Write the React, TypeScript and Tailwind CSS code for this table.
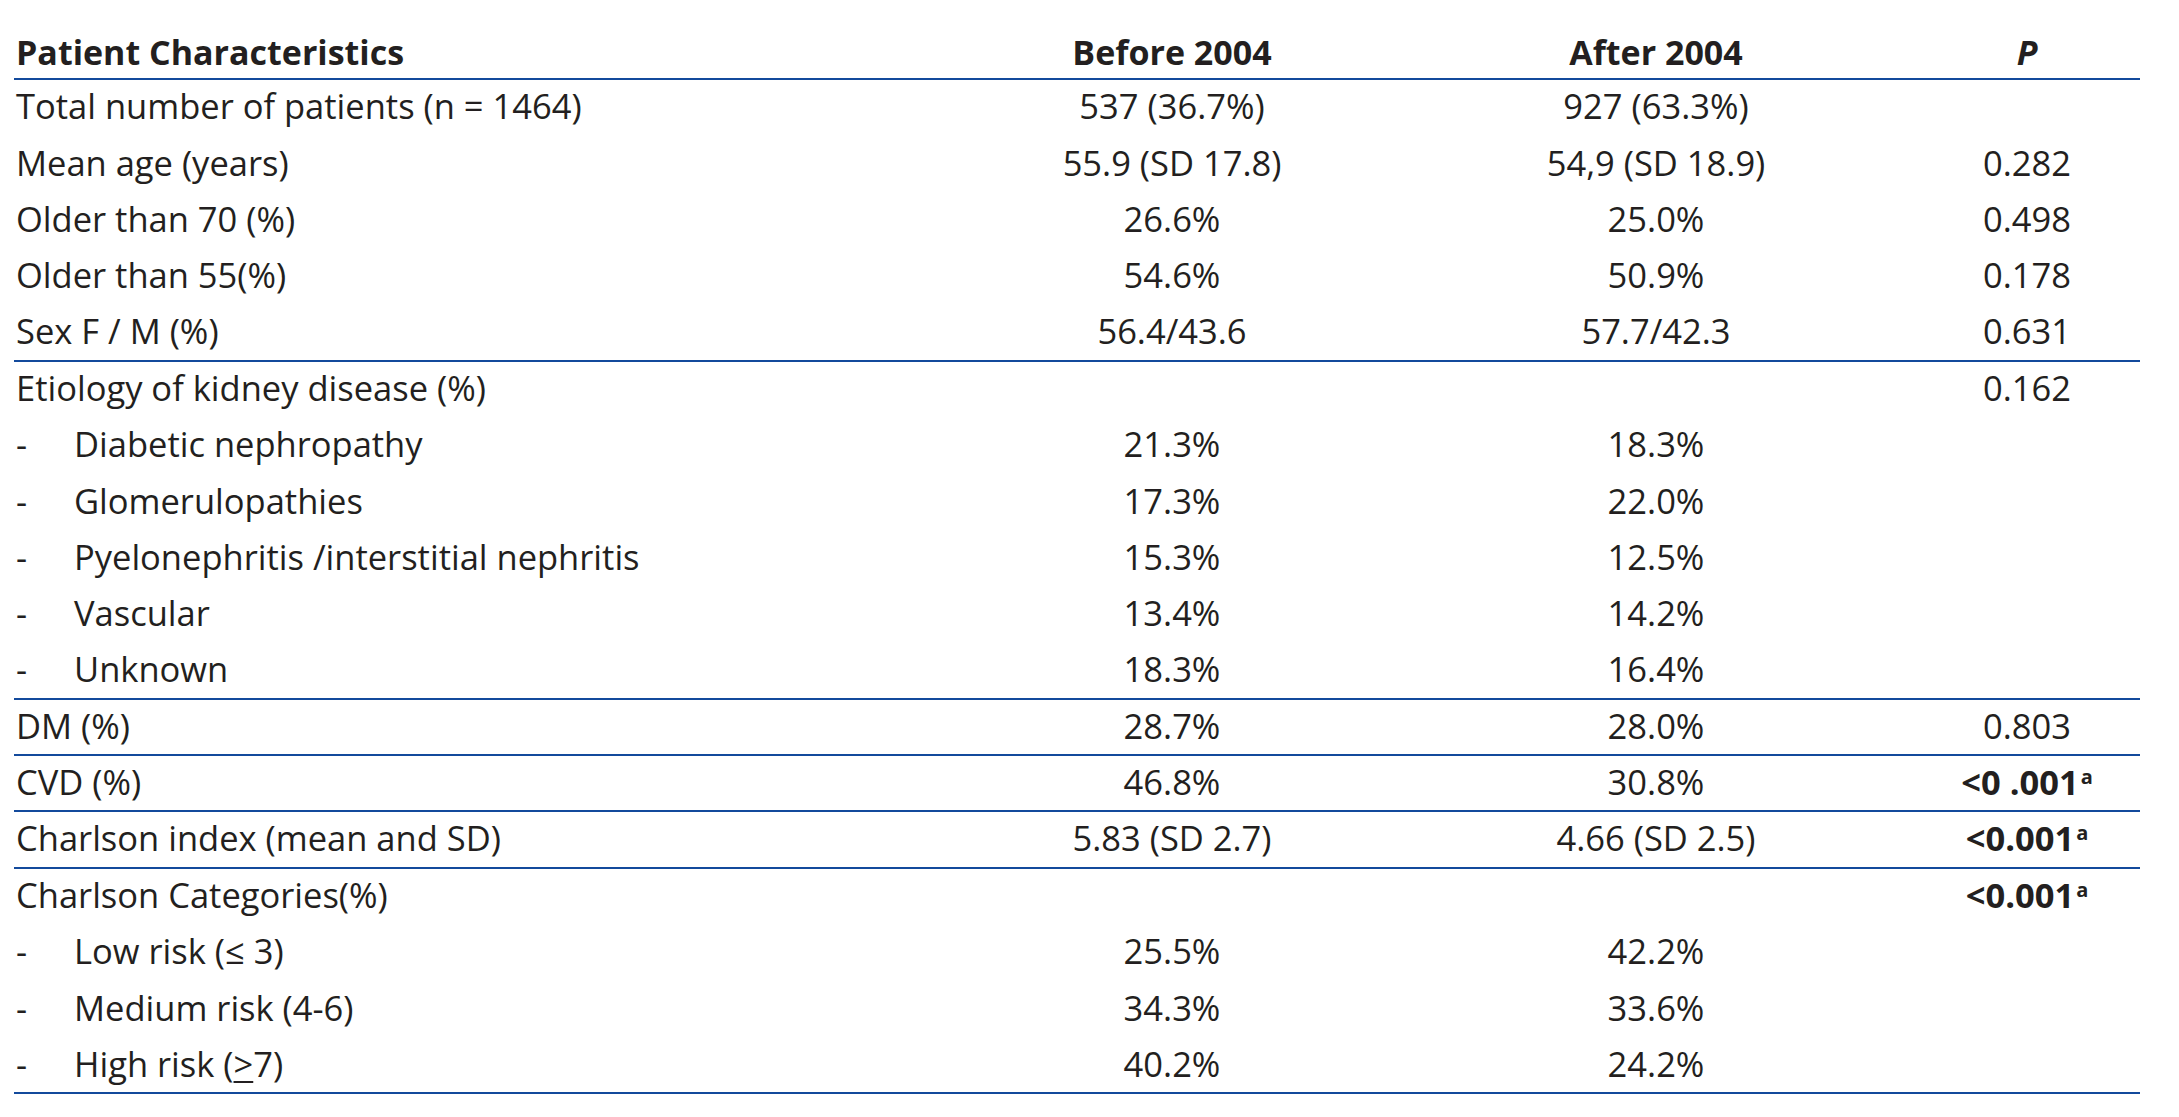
import React from "react";

type Row = {
  label: React.ReactNode;
  before?: string;
  after?: string;
  p?: React.ReactNode;
  sub?: boolean;
  line?: boolean;
};

const Sig = ({ value }: { value: string }) => (
  <span className="font-bold">
    {value}
    <span className="relative -top-[11px] ml-[2px] text-[20px]">a</span>
  </span>
);

const rows: Row[] = [
  { label: "Total number of patients (n = 1464)", before: "537 (36.7%)", after: "927 (63.3%)" },
  { label: "Mean age (years)", before: "55.9 (SD 17.8)", after: "54,9 (SD 18.9)", p: "0.282" },
  { label: "Older than 70 (%)", before: "26.6%", after: "25.0%", p: "0.498" },
  { label: "Older than 55(%)", before: "54.6%", after: "50.9%", p: "0.178" },
  { label: "Sex F / M (%)", before: "56.4/43.6", after: "57.7/42.3", p: "0.631", line: true },
  { label: "Etiology of kidney disease (%)", p: "0.162" },
  { label: "Diabetic nephropathy", before: "21.3%", after: "18.3%", sub: true },
  { label: "Glomerulopathies", before: "17.3%", after: "22.0%", sub: true },
  { label: "Pyelonephritis /interstitial nephritis", before: "15.3%", after: "12.5%", sub: true },
  { label: "Vascular", before: "13.4%", after: "14.2%", sub: true },
  { label: "Unknown", before: "18.3%", after: "16.4%", sub: true, line: true },
  { label: "DM (%)", before: "28.7%", after: "28.0%", p: "0.803", line: true },
  { label: "CVD (%)", before: "46.8%", after: "30.8%", p: <Sig value="<0 .001" />, line: true },
  { label: "Charlson index (mean and SD)", before: "5.83 (SD 2.7)", after: "4.66 (SD 2.5)", p: <Sig value="<0.001" />, line: true },
  { label: "Charlson Categories(%)", p: <Sig value="<0.001" /> },
  { label: "Low risk (≤ 3)", before: "25.5%", after: "42.2%", sub: true },
  { label: "Medium risk (4-6)", before: "34.3%", after: "33.6%", sub: true },
  {
    label: (
      <>
        High risk (<span className="underline decoration-[2px] underline-offset-[4px]">&gt;</span>7)
      </>
    ),
    before: "40.2%",
    after: "24.2%",
    sub: true,
    line: true,
  },
];

const cols = "grid grid-cols-[932px_452px_516px_226px]";

export default function App() {
  return (
    <div className="min-h-screen w-full bg-white text-[#231f20] font-['Open_Sans',sans-serif]">
      <div className="w-[2126px] ml-[14px]">
        {/* Header */}
        <div className={`${cols} h-[80px] border-b-[2.3px] border-[#134a9c] items-end pb-0 text-[34px] font-bold`}>
          <div className="pl-[2px]">Patient Characteristics</div>
          <div className="text-center">Before 2004</div>
          <div className="text-center">After 2004</div>
          <div className="text-center italic">P</div>
        </div>

        {/* Body */}
        {rows.map((r, i) => (
          <div
            key={i}
            className={`${cols} h-[56.35px] items-center pb-[4px] text-[34.5px] ${
              r.line ? "border-b-[2.3px] border-[#134a9c]" : ""
            }`}
          >
            <div className="pl-[2px] flex whitespace-nowrap">
              {r.sub && <span className="w-[58px] shrink-0">-</span>}
              <span>{r.label}</span>
            </div>
            <div className="text-center">{r.before}</div>
            <div className="text-center">{r.after}</div>
            <div className="text-center">{r.p}</div>
          </div>
        ))}
      </div>
    </div>
  );
}
